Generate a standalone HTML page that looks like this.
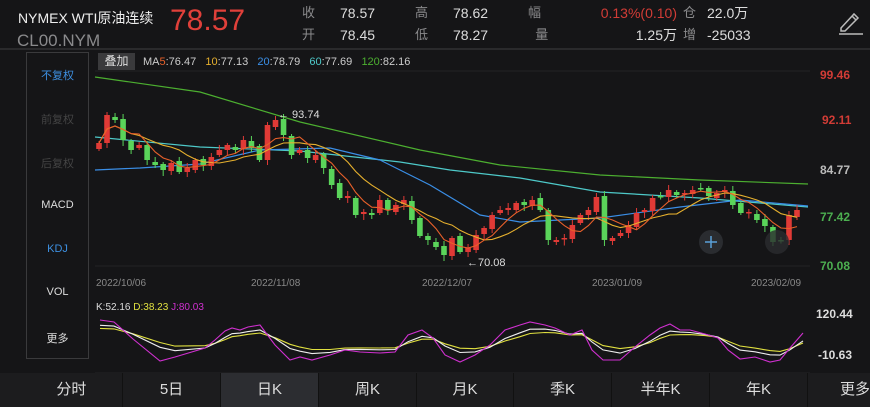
<!DOCTYPE html>
<html><head><meta charset="utf-8">
<style>
*{margin:0;padding:0;box-sizing:border-box}
body{width:870px;height:407px;background:#151517;overflow:hidden;font-family:"Liberation Sans","Noto Sans CJK SC",sans-serif;color:#ddd;position:relative}
.a{position:absolute;white-space:nowrap}
.side{position:absolute;left:26px;top:52px;width:63px;height:307px;border:1px solid #3a3a3c;}
.side div{position:absolute;left:0;width:100%;text-align:center;font-size:11px}
.tabs{position:absolute;left:0;top:373px;width:870px;height:34px;background:#1c1c1e}
.tab{position:absolute;top:0;height:34px;line-height:34px;text-align:center;font-size:15px;color:#ddd;border-left:1px solid #111}
</style></head><body>
<div class="a" style="left:18px;top:8px;font-size:14px;color:#eee">NYMEX WTI原油连续</div>
<div class="a" style="left:17px;top:31px;font-size:17px;color:#8a8a8c">CL00.NYM</div>
<div class="a" style="left:170px;top:4px;font-size:30px;color:#e0403a">78.57</div>
<div class="a" style="left:302px;top:2px;font-size:13px;color:#8a8a8c;line-height:22px">收<br>开</div>
<div class="a" style="left:340px;top:2px;font-size:14px;color:#ddd;line-height:22px">78.57<br>78.45</div>
<div class="a" style="left:415px;top:2px;font-size:13px;color:#8a8a8c;line-height:22px">高<br>低</div>
<div class="a" style="left:453px;top:2px;font-size:14px;color:#ddd;line-height:22px">78.62<br>78.27</div>
<div class="a" style="left:528px;top:2px;font-size:13px;color:#8a8a8c;line-height:22px">幅<br>&nbsp;&nbsp;量</div>
<div class="a" style="right:193px;top:2px;font-size:14px;color:#ddd;line-height:22px;text-align:right"><span style="color:#d23c36">0.13%(0.10)</span><br>1.25万</div>
<div class="a" style="left:683px;top:2px;font-size:13px;color:#8a8a8c;line-height:22px">仓<br>增</div>
<div class="a" style="left:707px;top:2px;font-size:14px;color:#ddd;line-height:22px">22.0万<br>-25033</div>
<svg class="a" style="left:836px;top:8px" width="28" height="28" viewBox="0 0 28 28"><path d="M5 20 L18 6 L22 10 L9 23 L5 23 Z M16 8 L20 12" fill="none" stroke="#bbb" stroke-width="1.5"/><line x1="3" y1="26" x2="27" y2="26" stroke="#bbb" stroke-width="1.6"/></svg>
<div class="a" style="left:0;top:48px;width:870px;height:2px;background:#2a2a2c"></div>
<div class="side">
<div style="top:14px;color:#3d8fe0">不复权</div>
<div style="top:58px;color:#444">前复权</div>
<div style="top:102px;color:#444">后复权</div>
<div style="top:146px;color:#ddd">MACD</div>
<div style="top:190px;color:#3d8fe0">KDJ</div>
<div style="top:233px;color:#ddd">VOL</div>
<div style="top:277px;color:#ddd">更多</div>
</div>
<div class="a" style="left:98px;top:53px;width:37px;height:17px;background:#3a3a3c;font-size:12px;color:#ddd;text-align:center;line-height:17px">叠加</div>
<div class="a" style="left:143px;top:56px;font-size:11px;color:#ccc">MA<span style="color:#e8602a">5</span>:76.47&nbsp;&nbsp; <span style="color:#e6b02e">10</span>:77.13&nbsp;&nbsp; <span style="color:#3a8ee6">20</span>:78.79&nbsp;&nbsp; <span style="color:#4ec9c9">60</span>:77.69&nbsp;&nbsp; <span style="color:#4caf30">120</span>:82.16</div>
<div class="a" style="left:820px;top:68px;font-size:12px;font-weight:bold;color:#d23c36">99.46</div>
<div class="a" style="left:822px;top:113px;font-size:12px;font-weight:bold;color:#d23c36">92.11</div>
<div class="a" style="left:820px;top:163px;font-size:12px;font-weight:bold;color:#bbb">84.77</div>
<div class="a" style="left:820px;top:210px;font-size:12px;font-weight:bold;color:#4caf50">77.42</div>
<div class="a" style="left:820px;top:259px;font-size:12px;font-weight:bold;color:#4caf50">70.08</div>
<div class="a" style="left:96px;top:278px;font-size:10px;color:#888">2022/10/06</div>
<div class="a" style="left:251px;top:278px;font-size:10px;color:#888">2022/11/08</div>
<div class="a" style="left:422px;top:278px;font-size:10px;color:#888">2022/12/07</div>
<div class="a" style="left:592px;top:278px;font-size:10px;color:#888">2023/01/09</div>
<div class="a" style="left:751px;top:278px;font-size:10px;color:#888">2023/02/09</div>
<div class="a" style="left:96px;top:302px;font-size:10px;color:#ddd">K:52.16 <span style="color:#e0e040">D:38.23</span> <span style="color:#d030d0">J:80.03</span></div>
<div class="a" style="left:816px;top:307px;font-size:12px;font-weight:bold;color:#ddd">120.44</div>
<div class="a" style="left:818px;top:348px;font-size:12px;font-weight:bold;color:#ddd">-10.63</div>
<svg id="ch" class="a" style="left:0;top:0" width="870" height="407"></svg>
<div class="tabs">
<div class="tab" style="left:0;width:122px;border:none">&nbsp;&nbsp;&nbsp;&nbsp;&nbsp;分时</div>
<div class="tab" style="left:122px;width:98px">5日</div>
<div class="tab" style="left:220px;width:98px;background:#2c2d31">日K</div>
<div class="tab" style="left:318px;width:98px">周K</div>
<div class="tab" style="left:416px;width:97px">月K</div>
<div class="tab" style="left:513px;width:98px">季K</div>
<div class="tab" style="left:611px;width:98px">半年K</div>
<div class="tab" style="left:709px;width:98px">年K</div>
<div class="tab" style="left:807px;width:90px;text-align:left;padding-left:32px">更多</div>
</div>
<script>
var s='';
function L(x1,y1,x2,y2,c){s+='<line x1="'+x1+'" y1="'+y1+'" x2="'+x2+'" y2="'+y2+'" stroke="'+c+'" stroke-width="1"/>';}
L(95,71,810,71,'#232325');L(95,266,810,266,'#232325');L(95,373,810,373,'#232325');
var C=[143,115,120,140,150,145,160,165,170,163,172,168,160,165,157,150,145,150,140,148,160,125,120,135,155,150,158,155,168,185,198,196,215,212,215,200,210,205,200,220,236,240,247,255,238,252,248,235,228,215,210,208,203,205,200,210,240,240,238,225,215,210,197,240,238,233,225,213,210,198,197,190,195,193,190,188,196,193,190,205,213,212,220,226,242,240,215,210];
var n=C.length,dx=(797-99)/(n-1),cs='';
function xs(i){return 99+i*dx}
for(var i=0;i<n;i++){var o=i?C[i-1]+((i*7)%5-2):C[0]+6,c=C[i];var up=c<o;var col=up?'#e03a36':'#5ad45a';var t=Math.min(o,c),b=Math.max(o,c);if(b-t<1.5)b=t+1.5;var x=xs(i);
cs+='<line x1="'+x+'" y1="'+(t-2-(i%4))+'" x2="'+x+'" y2="'+(b+2+((i*3)%5))+'" stroke="'+col+'" stroke-width="1"/>';
cs+='<rect x="'+(x-2.8)+'" y="'+t+'" width="5.6" height="'+(b-t)+'" fill="'+col+'"/>';}
function ma(w){var p='';for(var i=0;i<n;i++){var a=0,k=0;for(var j=Math.max(0,i-w+1);j<=i;j++){a+=C[j];k++;}p+=(i?'L':'M')+xs(i).toFixed(1)+' '+(a/k).toFixed(1);}return p;}
function P(pts){return 'M'+pts.map(function(p){return p.join(' ')}).join('L');}
s+='<path d="'+P([[95,77],[200,92],[300,122],[420,150],[500,165],[600,175],[700,180],[808,184]])+'" fill="none" stroke="#4caf30" stroke-width="1.2"/>';
s+='<path d="'+P([[95,137],[200,147],[300,151],[400,162],[450,170],[520,178],[600,192],[700,198],[808,207]])+'" fill="none" stroke="#4ec9c9" stroke-width="1.2"/>';
s+='<path d="M95 170 L140 168 L200 164 L260 150 L330 148 L380 160 L430 185 L480 215 L520 222 L600 218 L680 207 L740 200 L808 206" fill="none" stroke="#3a8ee6" stroke-width="1.2"/>';
s+=cs;
s+='<path d="'+ma(10)+'" fill="none" stroke="#e6b02e" stroke-width="1.1"/>';
s+='<path d="'+ma(5)+'" fill="none" stroke="#e8602a" stroke-width="1.1"/>';
s+='<text x="278" y="118" fill="#ddd" font-size="11" font-family="Liberation Sans">← 93.74</text>';
s+='<text x="467" y="266" fill="#ddd" font-size="11" font-family="Liberation Sans">←70.08</text>';
s+='<circle cx="711" cy="242" r="12" fill="#2a2c30"/><path d="M705 242h12M711 236v12" stroke="#5aa0d8" stroke-width="1.5"/>';
s+='<circle cx="777" cy="242" r="12" fill="#2a2c30" opacity="0.8"/>';
var J=[[100,320],[114,322],[133,339],[160,361],[175,357],[205,348],[215,340],[225,331],[232,328],[240,330],[248,327],[260,325],[275,345],[290,360],[300,357],[312,360],[330,355],[345,350],[360,352],[380,353],[395,352],[408,335],[422,330],[433,338],[445,355],[460,362],[475,355],[490,345],[505,330],[520,325],[530,322],[545,325],[555,328],[570,335],[582,330],[592,350],[603,360],[620,360],[635,347],[650,335],[660,328],[670,324],[680,330],[690,330],[705,334],[718,338],[728,350],[740,359],[755,357],[770,362],[780,360],[790,348],[803,333]];
function sm(a,al,off){var r=[],v=a[0][1];for(var i=0;i<a.length;i++){v=v+(a[i][1]-v)*al;r.push([a[i][0],(341+(v-341)*off).toFixed(1)]);}return r;}
s+='<path d="'+P(sm(J,0.45,0.6))+'" fill="none" stroke="#e0e040" stroke-width="1.1"/>';
s+='<path d="'+P(sm(J,0.6,0.75))+'" fill="none" stroke="#eee" stroke-width="1.1"/>';
s+='<path d="'+P(J)+'" fill="none" stroke="#d030d0" stroke-width="1.1"/>';
document.getElementById('ch').innerHTML=s;
</script>
</body></html>
